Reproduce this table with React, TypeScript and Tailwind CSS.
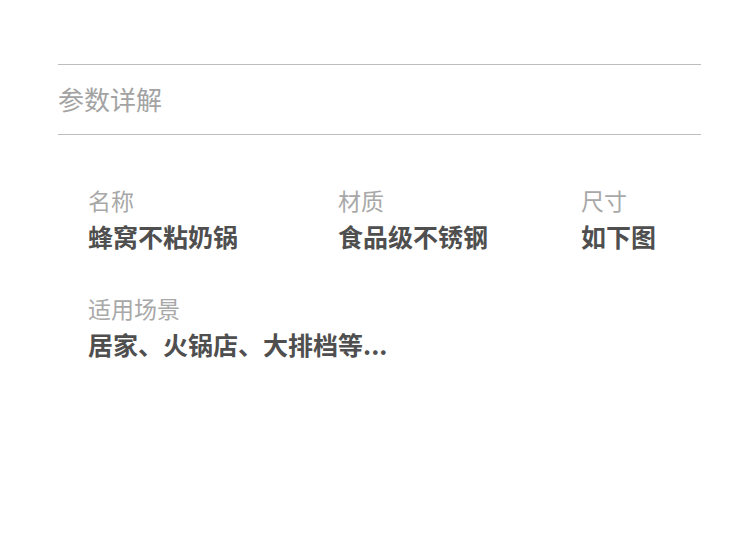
import React from "react";

const font = { fontFamily: '"Noto Sans CJK SC", "Noto Sans", sans-serif' };

function Item({ label, value, className = "" }: { label: string; value: string; className?: string }) {
  return (
    <div className={`flex flex-col ${className}`}>
      <div className="text-[23px] leading-[26px] text-[#a8a8a8]">{label}</div>
      <div className="mt-[10px] text-[25px] leading-[26px] font-bold text-[#4f4f4f]">{value}</div>
    </div>
  );
}

export default function App() {
  return (
    <div className="w-[750px] h-[533px] bg-white" style={font}>
      <div className="pt-[64px] px-[58px] w-[759px]">
        <div className="w-[643px] border-t border-[#bdbdbd]" />
        <div className="w-[643px] h-[69px] pb-[3px] flex items-center text-[26px] text-[#a3a3a3]">参数详解</div>
        <div className="w-[643px] border-t border-[#bdbdbd]" />
        <div className="pl-[30px] pt-[52px]">
          <div className="flex">
            <Item label="名称" value="蜂窝不粘奶锅" className="w-[250px]" />
            <Item label="材质" value="食品级不锈钢" className="w-[243px]" />
            <Item label="尺寸" value="如下图" />
          </div>
          <div className="mt-[46px]">
            <Item label="适用场景" value="居家、火锅店、大排档等..." />
          </div>
        </div>
      </div>
    </div>
  );
}
